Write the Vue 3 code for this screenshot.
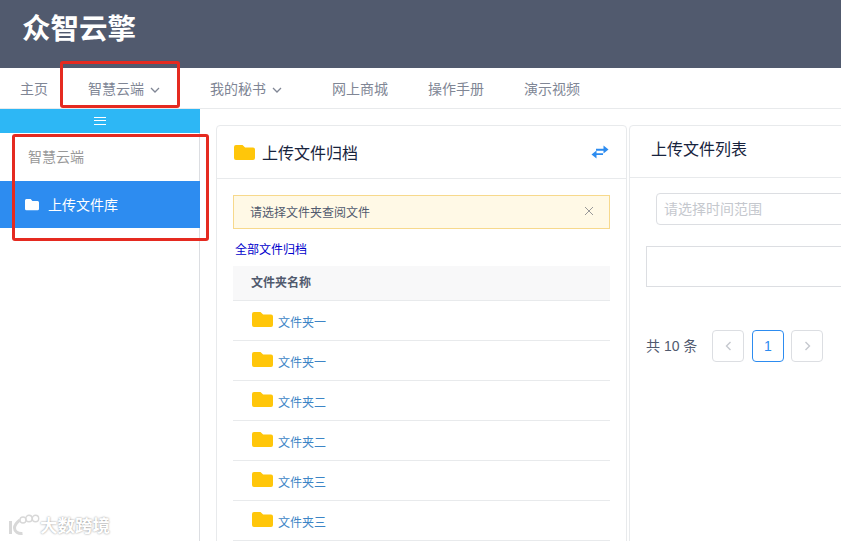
<script setup>
const navItems = [
  { name: "主页", width: 68 },
  { name: "智慧云端", width: 122, arrow: true },
  { name: "我的秘书", width: 122, arrow: true },
  { name: "网上商城", width: 96 },
  { name: "操作手册", width: 96 },
  { name: "演示视频", width: 96 },
];
const folders = ["文件夹一", "文件夹一", "文件夹二", "文件夹二", "文件夹三", "文件夹三"];
const folderPath = "M2 0h6.500l2.600 2.600H19a2 2 0 0 1 2 2V13a2 2 0 0 1-2 2H2a2 2 0 0 1-2-2V2a2 2 0 0 1 2-2z";
</script>

<template>
  <div class="page">
    <header class="top-bar">
      <div class="logo">众智云擎</div>
    </header>

    <nav class="nav">
      <a
        v-for="item in navItems"
        :key="item.name"
        class="nav-item"
        :style="{ width: item.width + 'px' }"
      >
        {{ item.name }}
        <svg v-if="item.arrow" class="chevron" width="10" height="6" viewBox="0 0 10 6">
          <path d="M1 1l4 4 4-4" fill="none" stroke="#808695" stroke-width="1.300" />
        </svg>
      </a>
    </nav>

    <div class="body">
      <aside class="sidebar">
        <div class="toggle">
          <span class="bars"></span>
        </div>
        <div class="side-title">智慧云端</div>
        <div class="side-item">
          <svg width="14" height="12" viewBox="0 0 21 16" preserveAspectRatio="none">
            <path :d="folderPath" fill="#fff" />
          </svg>
          <span>上传文件库</span>
        </div>
      </aside>

      <main class="main">
        <section class="card archive">
          <div class="card-head">
            <svg width="21" height="15" viewBox="0 0 21 15">
              <path :d="folderPath" fill="#ffc60a" />
            </svg>
            <h3>上传文件归档</h3>
            <svg class="swap" width="18" height="14" viewBox="0 0 18 14">
              <path d="M5 3.800h7.500V0.500l5 4-5 4V5.700H5z" fill="#2d8cf0" />
              <path d="M12 8.200H5.500V5.500l-5 4 5 4V10.100H12z" fill="#2d8cf0" />
            </svg>
          </div>
          <div class="archive-body">
            <div class="alert">
              <span>请选择文件夹查阅文件</span>
              <svg width="10" height="10" viewBox="0 0 10 10">
                <path d="M1 1l8 8M9 1l-8 8" stroke="#999" stroke-width="1" />
              </svg>
            </div>
            <a class="all-link">全部文件归档</a>
            <div class="table-head">文件夹名称</div>
            <div v-for="(f, i) in folders" :key="i" class="table-row">
              <svg width="21" height="15" viewBox="0 0 21 15">
                <path :d="folderPath" fill="#ffc60a" />
              </svg>
              <a>{{ f }}</a>
            </div>
          </div>
        </section>

        <section class="card list">
          <div class="card-head list-head">
            <h3>上传文件列表</h3>
          </div>
          <div class="list-body">
            <div class="date-input">请选择时间范围</div>
            <div class="empty-box"></div>
            <div class="pager">
              <span class="total">共 10 条</span>
              <span class="page-btn">
                <svg width="7" height="10" viewBox="0 0 7 10">
                  <path d="M5.500 1l-4 4 4 4" fill="none" stroke="#c5c8ce" stroke-width="1.400" />
                </svg>
              </span>
              <span class="page-btn current">1</span>
              <span class="page-btn">
                <svg width="7" height="10" viewBox="0 0 7 10">
                  <path d="M1.500 1l4 4-4 4" fill="none" stroke="#c5c8ce" stroke-width="1.400" />
                </svg>
              </span>
            </div>
          </div>
        </section>
      </main>
    </div>

    <!-- 标注框 -->
    <div class="mark mark-nav"></div>
    <div class="mark mark-side"></div>

    <div class="watermark">
      <svg width="32" height="22" viewBox="0 0 32 22">
        <g fill="none" stroke="#d8d8d8">
          <path d="M2.500 7v13" stroke-width="3" />
          <path d="M12 6C8 9 6.500 11.500 6.500 14c0 3.500 3.500 6 8 5.500" stroke-width="3" />
          <circle cx="15" cy="6" r="3" stroke-width="1.400" />
          <circle cx="21" cy="4.500" r="3.200" stroke-width="1.400" />
          <circle cx="27.500" cy="4.500" r="3.200" stroke-width="1.400" />
        </g>
      </svg>
      <span>大数跨境</span>
    </div>
  </div>
</template>

<style>
html,
body {
  margin: 0;
  overflow: hidden;
}
</style>

<style scoped>
.page {
  position: relative;
  width: 841px;
  height: 541px;
  overflow: hidden;
  background: #fff;
  font-family: "Liberation Sans", "Noto Sans CJK SC", sans-serif;
  color: #515a6e;
}
.top-bar {
  height: 68px;
  background: #515a6e;
  display: flex;
  align-items: center;
  padding-left: 22px;
  box-sizing: border-box;
}
.logo {
  color: #fff;
  font-size: 28.500px;
  font-weight: 700;
  line-height: 1;
  margin-top: -9px;
}
.nav {
  height: 41px;
  display: flex;
  align-items: center;
  border-bottom: 1px solid #e8eaec;
  box-sizing: border-box;
}
.nav-item {
  padding-left: 20px;
  box-sizing: border-box;
  font-size: 14px;
  color: #808695;
  white-space: nowrap;
}
.chevron {
  margin-left: 2px;
  vertical-align: 1px;
}
.body {
  display: flex;
  height: 432px;
}
.sidebar {
  width: 200px;
  flex: none;
  border-right: 1px solid #dcdee2;
  box-sizing: border-box;
}
.toggle {
  width: 200px;
  height: 24px;
  background: #2db7f5;
  display: flex;
  align-items: center;
  justify-content: center;
}
.bars {
  width: 12px;
  height: 6px;
  border-top: 1px solid #fff;
  border-bottom: 1px solid #fff;
  background: linear-gradient(#fff, #fff) center / 100% 1px no-repeat;
  margin-top: -1px;
}
.side-title {
  height: 48px;
  line-height: 48px;
  padding-left: 28px;
  font-size: 14px;
  color: #999;
}
.side-item {
  width: 200px;
  height: 47px;
  background: #2d8cf0;
  display: flex;
  align-items: center;
  padding-left: 25px;
  box-sizing: border-box;
  color: #fff;
  font-size: 14px;
  gap: 9px;
}
.side-item span {
  margin-top: -2px;
}
.main {
  flex: 1;
  min-width: 0;
  display: flex;
  gap: 2px;
  padding: 16px 0 0 16px;
}
.card {
  border: 1px solid #e8eaec;
  border-radius: 4px;
  box-sizing: border-box;
  height: 500px;
}
.archive {
  width: 411px;
  flex: none;
}
.list {
  width: 300px;
  flex: none;
}
.card-head {
  height: 53px;
  border-bottom: 1px solid #e8eaec;
  display: flex;
  align-items: center;
  padding: 0 17px;
  box-sizing: border-box;
  gap: 7px;
}
.card-head h3 {
  margin: 0;
  font-size: 16px;
  font-weight: 400;
  color: #17233d;
  flex: 1;
}
.list-head {
  height: 52px;
  padding: 0 0 8px 21px;
}
.archive-body {
  padding: 16px 16px 0;
}
.alert {
  height: 34px;
  border: 1px solid #f7d98c;
  background: #fff9e6;
  display: flex;
  align-items: center;
  justify-content: space-between;
  box-sizing: border-box;
  padding: 0 15px 2px 16px;
  font-size: 12px;
  color: #515a6e;
}
.all-link {
  display: block;
  height: 37px;
  line-height: 42px;
  padding-left: 2px;
  font-size: 12px;
  color: #0000cc;
}
.table-head {
  height: 35px;
  line-height: 35px;
  background: #f8f8f9;
  border-bottom: 1px solid #e8eaec;
  box-sizing: border-box;
  padding-left: 18px;
  font-size: 12px;
  font-weight: 700;
  color: #515a6e;
}
.table-row {
  height: 40px;
  border-bottom: 1px solid #e8eaec;
  box-sizing: border-box;
  padding-left: 19px;
  display: flex;
  align-items: center;
  gap: 5px;
  font-size: 12px;
  color: #3d85c6;
}
.table-row svg {
  margin-top: -2px;
}
.table-row a {
  margin-top: 2px;
}
.list-body {
  padding: 15px 0 0 16px;
}
.date-input {
  margin-left: 10px;
  height: 32px;
  line-height: 30px;
  border: 1px solid #dcdee2;
  border-radius: 4px;
  box-sizing: border-box;
  padding-left: 7px;
  font-size: 14px;
  color: #c5c8ce;
}
.empty-box {
  height: 41px;
  margin-top: 21px;
  border: 1px solid #dcdee2;
  box-sizing: border-box;
}
.pager {
  margin-top: 43px;
  display: flex;
  align-items: center;
}
.total {
  font-size: 14px;
  color: #515a6e;
  margin: -2px 15px 0 0;
}
.page-btn {
  width: 32px;
  height: 32px;
  margin-right: 7.500px;
  border: 1px solid #dcdee2;
  border-radius: 4px;
  box-sizing: border-box;
  display: flex;
  align-items: center;
  justify-content: center;
  font-size: 14px;
}
.page-btn.current {
  border-color: #2d8cf0;
  color: #2d8cf0;
}
.mark {
  position: absolute;
  border: 3px solid #e52a20;
  border-radius: 3px;
  box-sizing: border-box;
  pointer-events: none;
}
.mark-nav {
  left: 60px;
  top: 61px;
  width: 120px;
  height: 47px;
}
.mark-side {
  left: 12px;
  top: 134px;
  width: 197px;
  height: 107px;
}
.watermark {
  position: absolute;
  left: 8px;
  top: 512px;
  display: flex;
  align-items: center;
  font-size: 17.500px;
  font-weight: 700;
  color: #fff;
  text-shadow: 0 0 2px #888;
}
</style>
